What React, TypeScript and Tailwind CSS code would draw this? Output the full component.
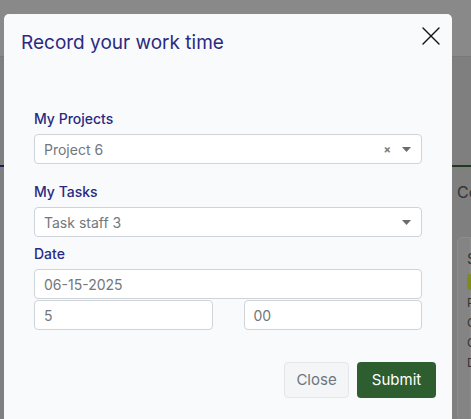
const font = { fontFamily: 'Inter, "Noto Sans", "Liberation Sans", sans-serif' };

function Caret() {
  return (
    <svg width="9" height="5" viewBox="0 0 9 5" className="shrink-0">
      <path d="M0 0 L9 0 L4.5 5 Z" fill="#6b6b6b" />
    </svg>
  );
}

function CloseIcon() {
  return (
    <svg width="18" height="18" viewBox="0 0 18 18" fill="none">
      <path d="M1 1 L17 17 M17 1 L1 17" stroke="#111" strokeWidth="1.4" strokeLinecap="round" />
    </svg>
  );
}

function SelectBox({ value, clearable }: { value: string; clearable?: boolean }) {
  return (
    <div className="flex h-[30px] items-center rounded-[4px] border border-[#ced4da] bg-white pl-[9px] pr-[10px]">
      <span className="flex-1 text-[14px] text-[#72777c]">{value}</span>
      {clearable && <span className="mr-[11px] text-[11px] font-bold leading-none text-[#7a7a7a]">×</span>}
      <Caret />
    </div>
  );
}

function TextBox({ value }: { value: string }) {
  return (
    <div className="flex h-[30px] items-center rounded-[4px] border border-[#ced4da] bg-white pl-[9px] text-[14px] text-[#72777c]">
      {value}
    </div>
  );
}

function Label({ children }: { children: string }) {
  return <div className="mb-[5px] text-[14px] leading-5 font-medium text-[#2a2a82]">{children}</div>;
}

export default function App() {
  return (
    <div className="relative h-[419px] w-[471px] overflow-hidden bg-[#7e7f7e]" style={font}>
      {/* page behind the dialog */}
      <div className="h-[57px] border-b border-[#787878] bg-[#898989]" />
      <div className="h-[108px]" />
      <div className="flex h-[2px]">
        <div className="w-[40px] bg-[#1d1d5a]" />
        <div className="flex-1 bg-[#1f3a1f]" />
      </div>
      <div className="pl-[457px]">
        <div className="mt-[13px] text-[16px] leading-6 text-[#333]">Co</div>
        <div className="mt-[33px] h-[184px] rounded-l-[5px] border border-[#8c8d8c] bg-[#838483] pl-[9px] pt-[11px] text-[12px] leading-5 text-[#333]">
          <div className="text-[15px]">S</div>
          <div className="mt-[5px] h-[16px] w-[12px] rounded-l-[3px] bg-[#7f8c1c]" />
          <div className="mt-[3px]">P</div>
          <div>O</div>
          <div>O</div>
          <div>D</div>
        </div>
      </div>

      {/* dialog */}
      <div className="absolute left-[4px] top-[14px] h-[420px] w-[448px] rounded-[5px] bg-[#f9fafc]">
        <div className="px-[17px] pt-[15px]">
          <h2 className="text-[19px] leading-7 font-normal text-[#2a2a82]">Record your work time</h2>
          <button className="absolute left-[418px] top-[13px]">
            <CloseIcon />
          </button>
        </div>

        <div className="px-[30px] pt-[52px]">
          <Label>My Projects</Label>
          <SelectBox value="Project 6" clearable />

          <div className="mt-[18px]">
            <Label>My Tasks</Label>
            <SelectBox value="Task staff 3" />
          </div>

          <div className="mt-[7px]">
            <Label>Date</Label>
            <TextBox value="06-15-2025" />
            <div className="mt-px grid grid-cols-2 gap-[31px]">
              <TextBox value="5" />
              <TextBox value="00" />
            </div>
          </div>
        </div>

        <div className="mt-[32px] flex justify-end gap-[8px] pr-[16px]">
          <button className="h-[36px] w-[65px] rounded-[4px] border border-[#e3e6ea] bg-[#f3f5f7] text-[15px] font-normal text-[#6c757d]">
            Close
          </button>
          <button className="h-[36px] w-[79px] rounded-[4px] bg-[#2e5e2f] text-[15px] font-normal text-white">
            Submit
          </button>
        </div>
      </div>
    </div>
  );
}
